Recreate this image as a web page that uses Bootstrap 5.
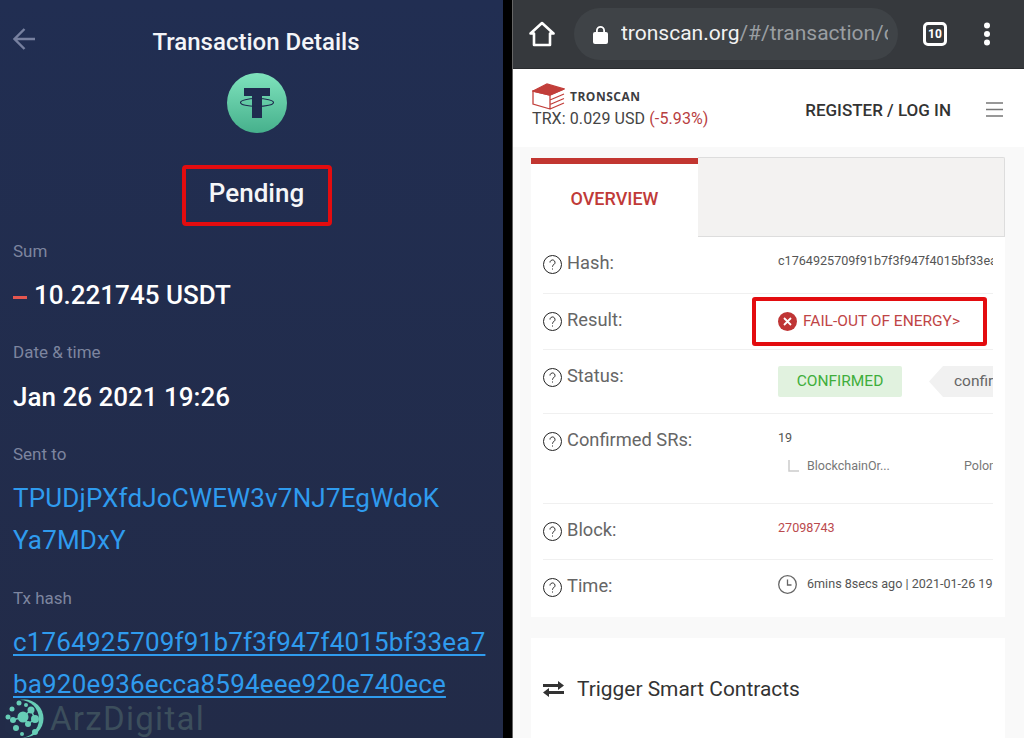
<!DOCTYPE html>
<html lang="en">
<head>
    <meta charset="UTF-8">
    <title>Transaction Details</title>
    <link href="https://cdn.jsdelivr.net/npm/bootstrap@5.3.0/dist/css/bootstrap.min.css" rel="stylesheet">
    <style>
        html, body { height: 738px; overflow: hidden; }
        body { font-family: Roboto, "Liberation Sans", sans-serif; background: #000; }
        .shot { width: 1024px; height: 738px; overflow: hidden; position: relative; }

        /* left: wallet app */
        .wallet { width: 503px; flex: none; background: linear-gradient(#212e52, #222b48); color: #fff; padding: 0 13px; }
        .wallet-head { height: 73px; padding-top: 19px; }
        .wallet-head .back { width: 23px; flex: none; margin-right: -23px; margin-top: 4px; }
        .wallet-title { flex: 1; text-align: center; font-size: 24px; font-weight: 500; padding-left: 9px; line-height: 46px; height: 46px; color: #f4f5f8; }
        .coin { width: 60px; height: 60px; border-radius: 50%; background: linear-gradient(#7fe3bd, #46b08c); margin: 0 auto; position: relative; left: 5px; }
        .pending { width: 150px; height: 61px; border: 4px solid #e30c0f; border-radius: 4px; margin: 32px auto 0; position: relative; left: 5px; font-size: 26px; font-weight: 500; line-height: 49px; text-align: center; color: #f5f6f8; }
        .w-label { font-size: 17px; color: #7d859f; line-height: 22px; margin-top: 25px; }
        .w-value { font-size: 26px; font-weight: 500; line-height: 42px; white-space: nowrap; margin-top: 12px; }
        .minus { display: inline-block; width: 14px; height: 3px; background: #e4564f; vertical-align: middle; margin-right: 7px; }
        .w-link { font-size: 26px; line-height: 42px; color: #2f9bee; font-weight: 400; white-space: nowrap; letter-spacing: .17px; }
        .w-first { margin-top: 12px; }
        a.w-link { text-decoration: underline; text-underline-offset: 3px; display: table; }
        .mark-wm { position: absolute; left: 5px; top: 699px; display: flex; align-items: center; gap: 6px; color: #3c4e5c; font-size: 33px; line-height: 28px; letter-spacing: 1.3px; height: 39px; }

        .splitter { width: 9px; flex: none; background: #000; }

        /* right: browser */
        .browser { flex: 1; background: #f9f9f9; border-left: 1px solid #666; }
        .chrome { height: 69px; background: #36393d; padding-left: 16px; border-bottom: 1px solid #2a2c2f; }
        .url-pill { width: 324px; height: 52px; margin-left: 19px; background: #3f4347; border-radius: 26px; padding-left: 19px; font-size: 21px; white-space: nowrap; overflow: hidden; color: #f2f2f2; }
        .url-pill span span { color: #9a9ea2; }
        .url-clip { width: 267px; overflow: hidden; display: block; margin-left: 13px; }
        .tabs-count { width: 24px; height: 24px; border: 3px solid #fff; border-radius: 5px; margin-left: 25px; color: #fff; font-size: 12px; font-weight: 700; line-height: 18px; text-align: center; }
        .dots { margin-left: 36px; }
        .site-head { height: 78px; background: #fff; padding: 12px 22px 0 19px; }
        .brand { font-size: 12px; font-weight: 700; color: #3d3d42; letter-spacing: .5px; font-family: "Open Sans", Roboto, sans-serif; }
        .price { font-size: 16px; color: #444; line-height: 20px; margin-top: -3px; letter-spacing: .1px; }
        .price em { font-style: normal; color: #b8403f; }
        .reg { font-size: 17px; color: #333; font-weight: 500; margin-right: 35px; margin-top: 17px; }
        .burger { width: 17px; height: 15px; margin-top: 21px; margin-right: -1px; }
        .panel-box { background: #fff; width: 474px; margin-left: 18px; }
        .tab-bar { height: 80px; margin-top: 10px; border-bottom: 1px solid #ddd; background: #f9f9f9; }
        .tab-on { width: 167px; background: #fff; border-top: 6px solid #c23631; color: #c03a38; font-size: 18px; font-weight: 500; text-align: center; line-height: 70px; margin-bottom: -1px; margin-top: 1px; }
        .tab-rest { flex: 1; background: #f3f2f1; border: 1px solid #ddd; border-bottom: 0; border-left: 0; border-top-right-radius: 2px; }
        .info-rows { padding: 0 12px; height: 380px; }
        .info-row { border-bottom: 1px solid #f0f0f0; overflow: hidden; }
        .info-row:last-child { border-bottom: 0; }
        .r-result, .r-block, .r-time { height: 56px; }
        .r-hash { height: 57px; }
        .r-status { height: 64px; }
        .r-srs { height: 90px; }
        .r-label { width: 235px; flex: none; padding-top: 15px; color: #666; font-size: 18.3px; line-height: 22px; display: flex; gap: 5px; }
        .r-label svg { margin-top: 3px; flex: none; }
        .r-val { font-size: 12.6px; color: #555; overflow: hidden; white-space: nowrap; width: 215px; padding-top: 15px; line-height: 18px; }
        .fail-box { position: absolute; left: 752px; top: 297px; width: 235px; height: 49px; border: 4px solid #e30c0f; border-radius: 3px; }
        .fail { color: #bf4546; font-size: 15.5px; line-height: 20px; padding-top: 17px; gap: 6px; }
        .ok-tag { background: #e1f2df; color: #3fae3b; font-size: 15.5px; width: 124px; height: 31px; line-height: 31px; text-align: center; border-radius: 2px; flex: none; }
        .conf-tag { background: #f1f1f1; height: 31px; line-height: 31px; font-size: 15.5px; color: #666; padding-left: 25px; margin-left: 27px; clip-path: polygon(14px 0, 100% 0, 100% 100%, 14px 100%, 0 50%); flex: none; width: 64px; overflow: hidden; white-space: nowrap; }
        .sub-sr { margin-top: 10px; font-size: 12.5px; color: #777; }
        .sub-sr span:last-child { width: 29px; overflow: hidden; }
        .contract-box { height: 110px; margin-top: 21px; }
        .contract-title { font-size: 20.9px; color: #333; padding: 37px 0 0 12px; gap: 13px; line-height: 28px; }
    </style>
</head>
<body>
    <div class="shot d-flex">
        <!-- Wallet screen -->
        <div class="wallet">
            <div class="wallet-head d-flex">
                <svg class="back" height="30" viewBox="0 0 23 30" fill="none" stroke="#77809f" stroke-width="2.4"><path d="M1.5 17H22M11.5 7 1.5 17l10 10" transform="translate(0 -1)"/></svg>
                <div class="wallet-title">Transaction Details</div>
            </div>
            <div class="coin">
                <svg class="d-block" width="60" height="60" viewBox="0 0 60 60" fill="#1f2c4f"><path d="M17 15h26v8h-8v22H25V23h-8z"/><ellipse cx="30" cy="29.500" rx="16.500" ry="4" fill="none" stroke="#1f2c4f" stroke-width="1.100"/></svg>
            </div>
            <div class="pending">Pending</div>

            <div class="w-label" style="margin-top:14px">Sum</div>
            <div class="w-value"><span class="minus"></span>10.221745 USDT</div>
            <div class="w-label">Date &amp; time</div>
            <div class="w-value" style="margin-top:13px">Jan 26 2021 19:26</div>
            <div class="w-label">Sent to</div>
            <div class="w-link w-first">TPUDjPXfdJoCWEW3v7NJ7EgWdoK</div>
            <div class="w-link">Ya7MDxY</div>
            <div class="w-label" style="margin-top:26px">Tx hash</div>
            <a class="w-link w-first" href="#">c1764925709f91b7f3f947f4015bf33ea7</a>
            <a class="w-link" href="#">ba920e936ecca8594eee920e740ece</a>
        </div>
        <div class="mark-wm">
            <svg width="39" height="39" viewBox="0 0 39 39" fill="#67cdb6" class="flex-shrink-0">
                <circle cx="19.500" cy="19.500" r="19"/>
                <circle cx="15" cy="20" r="19" fill="#222c49"/>
                <circle cx="14" cy="4" r="2.500"/><circle cx="21" cy="6" r="2"/><circle cx="7" cy="10" r="2.500"/><circle cx="3" cy="18" r="2.500"/>
                <circle cx="8" cy="21" r="3"/><circle cx="18" cy="18" r="5.500"/><circle cx="26" cy="11" r="3.500"/><circle cx="30" cy="20" r="4"/>
                <circle cx="23" cy="25" r="3"/><circle cx="11" cy="29" r="3"/><circle cx="17" cy="35" r="2"/><circle cx="30" cy="33" r="3"/>
                <path d="M18 18 26 11 30 20 23 25zM8 21 18 18" stroke="#67cdb6" stroke-width="1.500" fill="none"/>
            </svg>
            <span>ArzDigital</span>
        </div>

        <div class="splitter"></div>

        <!-- Browser screen -->
        <div class="browser">
            <div class="chrome d-flex align-items-center">
                <svg width="26" height="26" viewBox="0 0 26 26" fill="none" stroke="#fff" stroke-width="2.600" stroke-linejoin="round"><path d="M1.500 12.500 13 2l11.500 10.500H21V24H5V12.500z"/></svg>
                <div class="url-pill d-flex align-items-center">
                    <svg class="flex-shrink-0" width="15" height="19" viewBox="0 0 15 19" fill="#fff"><path d="M3 8V5.500a4.500 4.500 0 0 1 9 0V8h-1.800V5.500a2.700 2.700 0 0 0-5.400 0V8z"/><rect y="7" width="15" height="12" rx="2"/></svg>
                    <span class="url-clip">tronscan.org<span>/#/transaction/c</span></span>
                </div>
                <div class="tabs-count">10</div>
                <svg class="dots" width="8" height="24" viewBox="0 0 8 24" fill="#fff"><circle cx="4" cy="3.500" r="3"/><circle cx="4" cy="12" r="3"/><circle cx="4" cy="20.500" r="3"/></svg>
            </div>

            <div class="site-head d-flex justify-content-between">
                <div>
                    <div class="d-flex align-items-center" style="height:31px;gap:5px">
                        <svg width="33" height="27" viewBox="0 0 33 27" fill="none" stroke="#c23e3a" stroke-width="1.300"><path d="M1 8 15 1l17 5-14 6z" fill="#c23e3a"/><path d="M1 8v13l17 5V12L1 8zM18 26l14-6M18 21.500l14-6M18 17l14-6M18 12l14-6"/></svg>
                        <span class="brand">TRONSCAN</span>
                    </div>
                    <div class="price">TRX: 0.029 USD <em>(-5.93%)</em></div>
                </div>
                <div class="d-flex align-items-start">
                    <div class="reg">REGISTER / LOG IN</div>
                    <svg class="burger" viewBox="0 0 17 15" stroke="#777" stroke-width="1.300"><path d="M0 1h17M0 7.500h17M0 14h17"/></svg>
                </div>
            </div>

            <div class="panel-box">
                <div class="tab-bar d-flex">
                    <div class="tab-on">OVERVIEW</div>
                    <div class="tab-rest"></div>
                </div>
                <div class="info-rows">
                    <div class="info-row r-hash d-flex">
                        <div class="r-label"><svg width="19" height="19" viewBox="0 0 19 19" fill="none" stroke="#222"><circle cx="9.500" cy="9.500" r="9"/><path d="M7 7.500a2.500 2.500 0 1 1 3.800 2.100c-.9.600-1.300 1-1.300 2.100M9.500 13.500v1"/></svg>Hash:</div>
                        <div class="r-val">c1764925709f91b7f3f947f4015bf33ea7</div>
                    </div>
                    <div class="info-row r-result d-flex">
                        <div class="r-label"><svg width="19" height="19" viewBox="0 0 19 19" fill="none" stroke="#222"><circle cx="9.500" cy="9.500" r="9"/><path d="M7 7.500a2.500 2.500 0 1 1 3.800 2.100c-.9.600-1.300 1-1.300 2.100M9.500 13.500v1"/></svg>Result:</div>
                        <div class="fail d-flex">
                            <svg width="19" height="19" viewBox="0 0 19 19" style="margin-top:1px"><circle cx="9.500" cy="9.500" r="9.500" fill="#bf3535"/><path d="m6 6 7 7m0-7-7 7" stroke="#fff" stroke-width="1.800"/></svg>
                            <span>FAIL-OUT OF ENERGY&gt;</span>
                        </div>
                    </div>
                    <div class="info-row r-status d-flex">
                        <div class="r-label"><svg width="19" height="19" viewBox="0 0 19 19" fill="none" stroke="#222"><circle cx="9.500" cy="9.500" r="9"/><path d="M7 7.500a2.500 2.500 0 1 1 3.800 2.100c-.9.600-1.300 1-1.300 2.100M9.500 13.500v1"/></svg>Status:</div>
                        <div class="d-flex" style="width:215px;overflow:hidden;padding-top:16px;height:47px">
                            <div class="ok-tag">CONFIRMED</div>
                            <div class="conf-tag">confirmed</div>
                        </div>
                    </div>
                    <div class="info-row r-srs d-flex">
                        <div class="r-label"><svg width="19" height="19" viewBox="0 0 19 19" fill="none" stroke="#222"><circle cx="9.500" cy="9.500" r="9"/><path d="M7 7.500a2.500 2.500 0 1 1 3.800 2.100c-.9.600-1.300 1-1.300 2.100M9.500 13.500v1"/></svg>Confirmed SRs:</div>
                        <div class="r-val">
                            19
                            <div class="sub-sr d-flex">
                                <svg width="12" height="18" viewBox="0 0 12 18" fill="none" stroke="#ccc" stroke-width="1.500" class="flex-shrink-0" style="margin:0 7px 0 10px"><path d="M1 3v11h10"/></svg>
                                <span class="flex-shrink-0" style="width:157px">BlockchainOr...</span>
                                <span>Poloniex</span>
                            </div>
                        </div>
                    </div>
                    <div class="info-row r-block d-flex">
                        <div class="r-label"><svg width="19" height="19" viewBox="0 0 19 19" fill="none" stroke="#222"><circle cx="9.500" cy="9.500" r="9"/><path d="M7 7.500a2.500 2.500 0 1 1 3.800 2.100c-.9.600-1.300 1-1.300 2.100M9.500 13.500v1"/></svg>Block:</div>
                        <div class="r-val" style="color:#bb4a4d">27098743</div>
                    </div>
                    <div class="info-row r-time d-flex">
                        <div class="r-label"><svg width="19" height="19" viewBox="0 0 19 19" fill="none" stroke="#222"><circle cx="9.500" cy="9.500" r="9"/><path d="M7 7.500a2.500 2.500 0 1 1 3.800 2.100c-.9.600-1.300 1-1.300 2.100M9.500 13.500v1"/></svg>Time:</div>
                        <div class="r-val d-flex" style="gap:10px">
                            <svg class="flex-shrink-0" width="19" height="19" viewBox="0 0 19 19" fill="none" stroke="#666" stroke-width="1.300"><circle cx="9.500" cy="9.500" r="8.800"/><path d="M9.500 4.500v5.500h4"/></svg>
                            <span>6mins 8secs ago | 2021-01-26 19</span>
                        </div>
                    </div>
                </div>
            </div>

            <div class="panel-box contract-box">
                <div class="contract-title d-flex align-items-center">
                    <svg width="21" height="16" viewBox="0 0 21 16" fill="#333"><path d="M0 3h15V0l6 4.500L15 9V6H0zM21 10H6V7L0 11.500 6 16v-3h15z"/></svg>
                    <span>Trigger Smart Contracts</span>
                </div>
            </div>
        </div>

        <div class="fail-box"></div>
    </div>
    <script src="https://cdn.jsdelivr.net/npm/bootstrap@5.3.0/dist/js/bootstrap.bundle.min.js"></script>
</body>
</html>
